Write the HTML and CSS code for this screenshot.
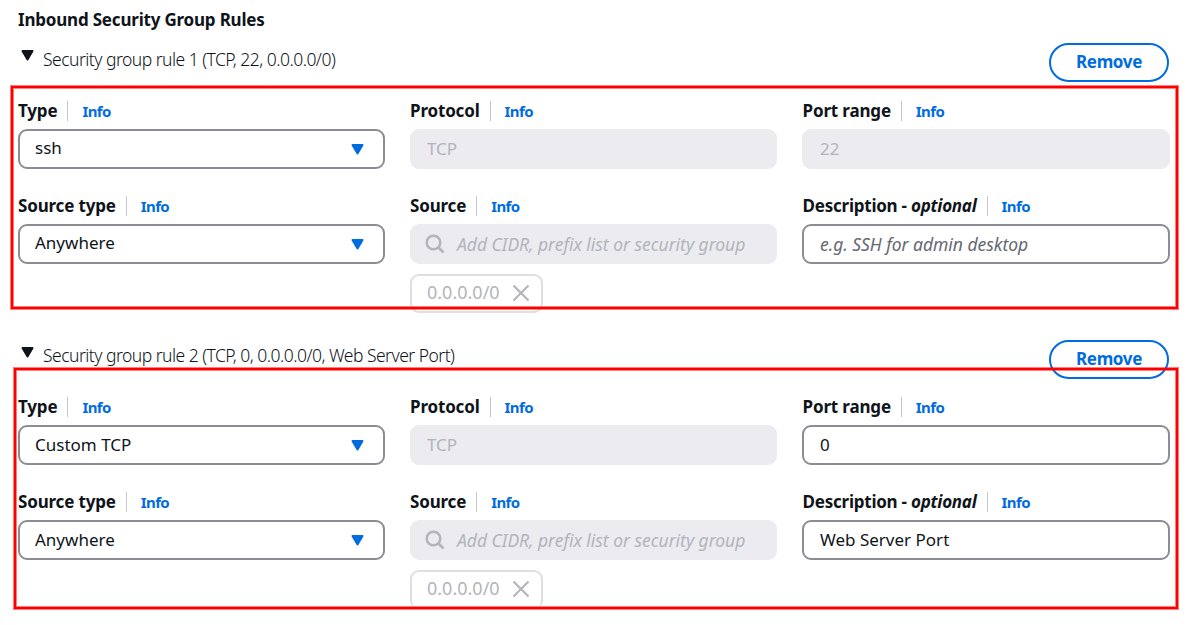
FILE: index.html
```html
<!DOCTYPE html>
<html lang="en">
<head>
<meta charset="utf-8">
<title>Inbound Security Group Rules</title>
<link rel="stylesheet" href="styles.css">
</head>
<body>
<main class="panel">
  <h1 class="title">Inbound Security Group Rules</h1>

  <section class="rule rule-first">
    <header class="rule-header">
      <svg class="caret" viewBox="0 0 13 11"><path d="M1.5 1h10L6.5 9.5z"/></svg>
      <h2 class="rule-name">Security group rule 1 (TCP, 22, 0.0.0.0/0)</h2>
      <button class="remove">Remove</button>
    </header>
    <div class="fields">
      <div class="field">
        <div class="label"><span>Type</span><a class="info">Info</a></div>
        <div class="control select"><span>ssh</span><svg class="arrow" viewBox="0 0 13 11"><path d="M1.5 1h10L6.5 9.5z"/></svg></div>
      </div>
      <div class="field">
        <div class="label"><span>Protocol</span><a class="info">Info</a></div>
        <div class="control disabled"><span>TCP</span></div>
      </div>
      <div class="field">
        <div class="label"><span>Port range</span><a class="info">Info</a></div>
        <div class="control disabled"><span>22</span></div>
      </div>
      <div class="field">
        <div class="label"><span>Source type</span><a class="info">Info</a></div>
        <div class="control select"><span>Anywhere</span><svg class="arrow" viewBox="0 0 13 11"><path d="M1.5 1h10L6.5 9.5z"/></svg></div>
      </div>
      <div class="field">
        <div class="label"><span>Source</span><a class="info">Info</a></div>
        <div class="control disabled"><svg class="search" viewBox="0 0 20 20"><circle cx="8.5" cy="8.5" r="6.8"/><path d="M13 13l5.5 5.5"/></svg><em class="hint">Add CIDR, prefix list or security group</em></div>
        <div class="token"><span class="address">0.0.0.0/0</span><svg class="close" viewBox="0 0 18 18"><path d="M1.5 1.5l15 15M16.5 1.5l-15 15"/></svg></div>
      </div>
      <div class="field">
        <div class="label"><span class="description">Description - <em>optional</em></span><a class="info">Info</a></div>
        <div class="control"><em class="hint placeholder">e.g. SSH for admin desktop</em></div>
      </div>
    </div>
    <div class="highlight highlight-first"></div>
  </section>

  <section class="rule rule-second">
    <header class="rule-header">
      <svg class="caret" viewBox="0 0 13 11"><path d="M1.5 1h10L6.5 9.5z"/></svg>
      <h2 class="rule-name">Security group rule 2 (TCP, 0, 0.0.0.0/0, Web Server Port)</h2>
      <button class="remove">Remove</button>
    </header>
    <div class="fields">
      <div class="field">
        <div class="label"><span>Type</span><a class="info">Info</a></div>
        <div class="control select"><span>Custom TCP</span><svg class="arrow" viewBox="0 0 13 11"><path d="M1.5 1h10L6.5 9.5z"/></svg></div>
      </div>
      <div class="field">
        <div class="label"><span>Protocol</span><a class="info">Info</a></div>
        <div class="control disabled"><span>TCP</span></div>
      </div>
      <div class="field">
        <div class="label"><span>Port range</span><a class="info">Info</a></div>
        <div class="control"><span>0</span></div>
      </div>
      <div class="field">
        <div class="label"><span>Source type</span><a class="info">Info</a></div>
        <div class="control select"><span>Anywhere</span><svg class="arrow" viewBox="0 0 13 11"><path d="M1.5 1h10L6.5 9.5z"/></svg></div>
      </div>
      <div class="field">
        <div class="label"><span>Source</span><a class="info">Info</a></div>
        <div class="control disabled"><svg class="search" viewBox="0 0 20 20"><circle cx="8.5" cy="8.5" r="6.8"/><path d="M13 13l5.5 5.5"/></svg><em class="hint">Add CIDR, prefix list or security group</em></div>
        <div class="token token-cut"><span class="address">0.0.0.0/0</span><svg class="close" viewBox="0 0 18 18"><path d="M1.5 1.5l15 15M16.5 1.5l-15 15"/></svg></div>
      </div>
      <div class="field">
        <div class="label"><span class="description">Description - <em>optional</em></span><a class="info">Info</a></div>
        <div class="control"><span>Web Server Port</span></div>
      </div>
    </div>
    <div class="highlight highlight-second"></div>
  </section>
</main>
</body>
</html>
```

FILE: styles.css
```css
* { box-sizing: border-box; }
body {
  margin: 0;
  width: 1189px;
  height: 625px;
  overflow: hidden;
  background: #fff;
  color: #0f141a;
  font-family: "Noto Sans", "Open Sans", sans-serif;
  font-size: 17px;
  line-height: 24px;
}
.panel { padding: 8px 19px 0 18px; }
.title { margin: 0; height: 35px; font-size: 17px; line-height: 24px; font-weight: 700; letter-spacing: -0.2px; white-space: nowrap; }
.rule { position: relative; height: 296px; }
.rule-header { display: flex; align-items: flex-start; height: 58px; }
.caret { width: 13px; height: 11px; margin: 7px 0 0 2.5px; fill: #0f141a; stroke: #0f141a; stroke-width: 2; stroke-linejoin: round; }
.rule-second .caret { margin-top: 8px; }
.rule-name { flex: 1; margin: 4px 0 0 9.5px; font-size: 17.5px; font-weight: 300; letter-spacing: -0.52px; white-space: nowrap; }
.remove {
  width: 120px; height: 39px; padding: 0 0 1px; margin-right: 1px;
  border: 2px solid #006ce0; border-radius: 20px;
  background: #fff; color: #006ce0;
  font: 700 17px/34px "Noto Sans", sans-serif; letter-spacing: -0.35px;
}
.rule-second .remove { margin-top: 1px; }
.fields { display: grid; grid-template-columns: 367px 367px 368px; column-gap: 25px; row-gap: 27px; }
.field { height: 68px; }
.label { display: flex; align-items: center; height: 20px; margin-bottom: 8px; font-weight: 700; letter-spacing: -0.17px; white-space: nowrap; }
.field:nth-child(3n) .label { padding-left: 0.6px; }
.description { letter-spacing: -0.24px; }
.info { height: 20px; margin-left: 10px; padding-left: 14px; border-left: 1px solid #c6c6cd; color: #006ce0; font-size: 15px; line-height: 20px; letter-spacing: -0.6px; }
.control {
  display: flex; align-items: center; height: 40px; padding: 0 15px;
  border: 2px solid #8c8c94; border-radius: 9px; background: #fff; white-space: nowrap;
}
.field:nth-child(3n) .control { padding-left: 16px; }
.rule-first .select span { margin-bottom: 2px; }
.disabled { background: #ebebf0; border-color: #ebebf0; color: #b4b4bb; }
.hint { margin-bottom: 1px; font-size: 17.5px; letter-spacing: -0.03px; }
.placeholder { color: #656871; }
.arrow { width: 13px; height: 11px; margin-left: auto; margin-right: 4px; fill: #006ce0; stroke: #006ce0; stroke-width: 2; stroke-linejoin: round; }
.search { width: 20px; height: 20px; margin: 0 12px 0 -2px; fill: none; stroke: #b4b4bb; stroke-width: 2.5; }
.token {
  display: flex; align-items: center; width: 133px; height: 39px; margin-top: 10px; padding-left: 15px;
  border: 2px solid #dedee3; border-radius: 9px; color: #b4b4bb; white-space: nowrap;
}
.token-cut { height: 37px; border-bottom: 0; border-radius: 9px 9px 6px 6px; }
.address { margin-bottom: 3px; font-size: 18px; }
.close { width: 18px; height: 18px; margin: 0 11px 2px auto; fill: none; stroke: #b4b4bb; stroke-width: 2.2; }
.highlight { position: absolute; border: 2px solid #f00; outline: 1px solid rgba(255,0,0,.5); box-shadow: inset 0 0 0 1px rgba(255,0,0,.5); }
.highlight-first { left: -7px; top: 43px; width: 1167px; height: 223px; }
.highlight-second { left: -4px; top: 29px; width: 1164px; height: 241px; }
```
